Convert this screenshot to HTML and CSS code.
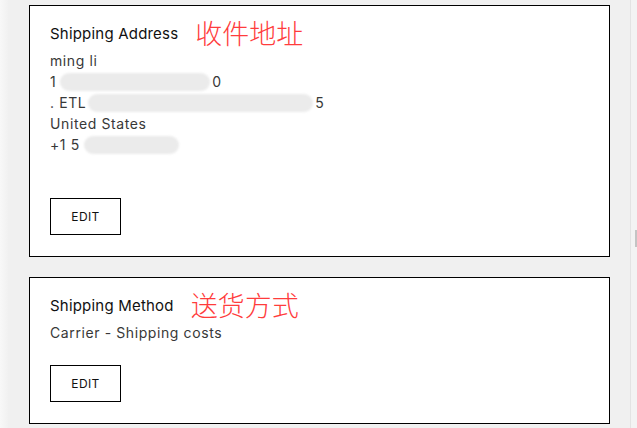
FILE: index.html
```html
<!DOCTYPE html>
<html>
<head>
<meta charset="utf-8">
<link rel="stylesheet" href="styles.css">
</head>
<body>
<div class="page">
  <div class="edge"></div>
  <main class="main">
    <section class="card">
      <div class="head">
        <h2 class="title">Shipping Address</h2>
        <span class="note">收件地址</span>
      </div>
      <div class="lines">
        <div class="line">ming li</div>
        <div class="line">1<span class="blur b1"></span>0</div>
        <div class="line">.&nbsp;ETL<span class="blur b2"></span>5</div>
        <div class="line">United States</div>
        <div class="line">+1 5<span class="blur b3"></span></div>
      </div>
      <button class="edit edit-tall">EDIT</button>
    </section>
    <section class="card">
      <div class="head">
        <h2 class="title">Shipping Method</h2>
        <span class="note">送货方式</span>
      </div>
      <div class="lines">
        <div class="line">Carrier - Shipping costs</div>
      </div>
      <button class="edit">EDIT</button>
    </section>
  </main>
  <div class="bar"><div class="thumb"></div></div>
</div>
</body>
</html>
```
FILE: styles.css
```css
html, body {
  margin: 0;
  padding: 0;
  background: #f0f0f0;
  font-family: Inter, "Noto Sans", sans-serif;
}
.page {
  display: flex;
  height: 428px;
  overflow: hidden;
}
.edge {
  width: 8px;
  flex: none;
  background: linear-gradient(to right, #f8f8f8, #f1f1f1);
}
.main {
  width: 581px;
  flex: none;
  margin-left: 21px;
  padding-top: 5px;
  display: flex;
  flex-direction: column;
  gap: 20px;
}
.card {
  background: #fff;
  border: 1px solid #000;
  padding: 13px 20px 21px;
}
.head {
  display: flex;
  align-items: center;
  gap: 17px;
  height: 28px;
}
.title {
  margin: 0;
  font-size: 15px;
  font-weight: 400;
  color: #111;
  letter-spacing: 0.2px;
}
.note {
  font-family: "Noto Sans CJK SC", sans-serif;
  font-size: 27px;
  font-weight: 300;
  color: #ff3c3c;
  line-height: 28px;
}
.lines {
  margin-top: 3px;
}
.line {
  font-size: 14px;
  line-height: 21px;
  color: #383838;
  letter-spacing: 0.6px;
  display: flex;
  align-items: center;
}
.blur {
  display: inline-block;
  height: 18px;
  background: #ebebeb;
  border-radius: 9px;
  filter: blur(1px);
}
.b1 { width: 150px; margin: 0 2px 0 4px; }
.b2 { width: 225px; margin: 0 2px 0 2px; }
.b3 { width: 95px; margin-left: 4px; }
.edit {
  display: block;
  margin-top: 22px;
  width: 71px;
  height: 37px;
  border: 1px solid #000;
  background: #fff;
  font-family: Inter, "Noto Sans", sans-serif;
  font-size: 12px;
  letter-spacing: 0.4px;
  color: #111;
  padding: 0;
}
.edit-tall {
  margin-top: 43px;
}
.bar {
  margin-left: 20px;
  width: 7px;
  flex: none;
  border-left: 1px solid #e3e3e3;
  background: #f3f3f3;
  position: relative;
}
.thumb {
  position: absolute;
  left: 4px;
  top: 230px;
  width: 2px;
  height: 17px;
  background: #c4c4c4;
}
```
